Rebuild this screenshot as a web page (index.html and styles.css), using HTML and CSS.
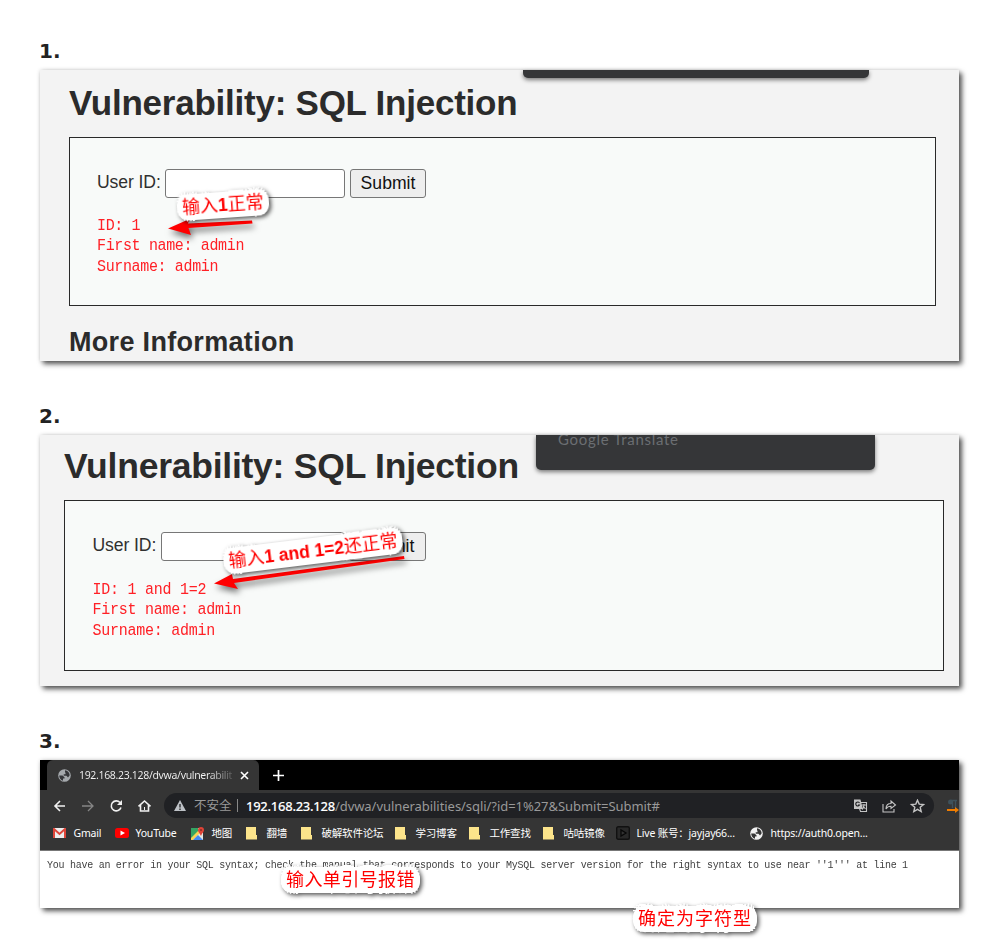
FILE: index.html
```
<!DOCTYPE html>
<html lang="zh-CN">
<head>
<meta charset="utf-8">
<title>SQL Injection</title>
<link rel="stylesheet" href="styles.css">
</head>
<body>
<main class="article">
  <h3 class="step">1.</h3>
  <section class="shot shot-one">
    <div class="popup popup-one"></div>
    <h1 class="title title-one">Vulnerability: SQL Injection</h1>
    <div class="panel panel-one">
      <div class="form"><span class="label">User ID:</span><span class="field"></span><span class="button">Submit</span></div>
      <pre class="result">ID: 1
First name: admin
Surname: admin</pre>
    </div>
    <h2 class="more">More Information</h2>
    <svg class="arrow" width="919" height="291"><path d="M128 158.500L149.500 149l-1.500 4.500 64-3 .5 3-64 4.500 2.500 7z"/></svg>
    <div class="note note-one">输入<b>1</b>正常</div>
  </section>

  <h3 class="step">2.</h3>
  <section class="shot shot-two">
    <div class="popup popup-two">Google Translate</div>
    <h1 class="title title-two">Vulnerability: SQL Injection</h1>
    <div class="panel panel-two">
      <div class="form"><span class="label">User ID:</span><span class="field"></span><span class="button">Submit</span></div>
      <pre class="result">ID: 1 and 1=2
First name: admin
Surname: admin</pre>
    </div>
    <svg class="arrow" width="919" height="251"><path d="M174 148.500L192 139l1 5 171-23 .5 3L194 148l4 6z"/></svg>
    <div class="note note-two">输入<b>1 and 1=2</b>还正常</div>
  </section>

  <h3 class="step">3.</h3>
  <section class="shot shot-three">
    <div class="tabs">
      <div class="tab">
        <svg class="globe" width="13" height="13" viewBox="0 0 13 13"><circle cx="6.500" cy="6.500" r="6.300" fill="#a5a9ad"/><path d="M1.200 6.500h3.300l2 1.800v1.200H5v2.200C2.500 11 1.300 9 1.200 6.500zM7 1.300c2.500.3 4.500 2.300 4.700 5L10 8.500 8.500 6.800H5.700V5.300h1.800V3.500H7z" fill="#35363a"/></svg>
        <span class="tab-title">192.168.23.128/dvwa/vulnerabilit</span>
        <svg width="9" height="9" viewBox="0 0 9 9"><path d="M1 1l7 7M8 1L1 8" stroke="#fff" stroke-width="1.600"/></svg>
      </div>
      <svg class="plus" width="11" height="11" viewBox="0 0 11 11"><path d="M5.500 0v11M0 5.500h11" stroke="#fff" stroke-width="1.700"/></svg>
    </div>
    <div class="toolbar">
      <svg class="nav" width="112" height="16" viewBox="0 0 112 16" fill="none" stroke="#f1f1f1" stroke-width="1.600">
        <path d="M13 8H3M8 3L3 8l5 5"/><path d="M30 8h11M36 3l5 5-5 5" stroke="#858585" stroke-width="1.300"/>
        <path d="M68 4.500a5 5 0 1 0 1 5"/><path d="M70 2v5h-5z" fill="#f1f1f1" stroke="none"/>
        <path d="M86.500 8.300l6-5.300 6 5.300M88.500 7v6h8V7"/><path d="M92.500 9v3" stroke-width="1"/>
      </svg>
      <div class="address">
        <svg class="warn" width="12" height="11" viewBox="0 0 12 11"><path d="M6 0l6 11H0z" fill="#bdc1c6"/><path d="M6 4v3.500M6 8.500V10" stroke="#202124" stroke-width="1.300"/></svg>
        <span class="unsafe">不安全</span><i class="bar"></i>
        <span class="url"><b>192.168.23.128</b><span class="path">/dvwa/vulnerabilities/sqli/?id=1%27&amp;Submit=Submit#</span></span>
        <svg class="actions" width="71" height="14" viewBox="0 0 71 14" fill="none" stroke="#c4c4c4" stroke-width="1.100">
          <path d="M5.500 3.500h7v9h-6l-1-3"/><path d="M.5 1h5.500l2.200 8.500H.5z" fill="#c4c4c4"/><path d="M5.500 4A2 2 0 1 0 5.500 6H4" stroke="#202124"/><path d="M8 6h4M10 5v1.500c0 2-1 3-2 4M9 7l2.500 3"/>
          <path d="M29 5v8h11v-3"/><path d="M32 10c0-4 2-5.500 5-5.500V2l4.500 4L37 9.500V7.300c-2 0-4 .7-5 2.700z"/>
          <path d="M63.500 1.200l1.700 3.900 4.300.4-3.300 2.800 1 4.200-3.700-2.200-3.700 2.200 1-4.200-3.300-2.800 4.300-.4z" stroke-width="1.400"/>
        </svg>
      </div>
      <svg class="extension" width="12" height="16" viewBox="0 0 12 16"><path d="M4 2.500h6M5.500 2v8M8.500 2v8" stroke="#3e515b" stroke-width="1.400"/><circle cx="3.500" cy="4" r="2.500" fill="#3e515b"/><path d="M0 12h10" stroke="#f07d00" stroke-width="2"/><path d="M8 9l4 3-4 3z" fill="#f07d00"/></svg>
    </div>
    <div class="bookmarks">
      <span class="mark"><svg width="13" height="10" viewBox="0 0 13 10"><path d="M0 0h13v10H0z" fill="#eee"/><path d="M1 10V1l5.500 5L12 1v9" fill="none" stroke="#df463a" stroke-width="2"/></svg>Gmail</span>
      <span class="mark"><svg width="14" height="10" viewBox="0 0 14 10"><rect width="14" height="10" rx="2.500" fill="#f00"/><path d="M5.500 2.500v5L10 5z" fill="#fff"/></svg>YouTube</span>
      <span class="mark"><svg width="13" height="13" viewBox="0 0 13 13"><path d="M0 1h12v12H0z" fill="#e5e8e4"/><path d="M0 1h7v5L0 12z" fill="#35a563"/><path d="M0 11l8-8 2 2-8 8H0z" fill="#f7d354"/><path d="M2 13l5-5 5 5z" fill="#448af1"/><path d="M10 9C8 5 7 5 7 3a3 3 0 0 1 6 0c0 2-1.500 2.500-3 6z" fill="#df4437"/><circle cx="10" cy="3" r="1" fill="#872d26"/></svg>地图</span>
      <span class="mark"><svg class="folder" width="12" height="13" viewBox="0 0 12 13"><path d="M0 0h10v8h1v4.500H0z"/></svg>翻墙</span>
      <span class="mark"><svg class="folder" width="12" height="13" viewBox="0 0 12 13"><path d="M0 0h10v8h1v4.500H0z"/></svg>破解软件论坛</span>
      <span class="mark"><svg class="folder" width="12" height="13" viewBox="0 0 12 13"><path d="M0 0h10v8h1v4.500H0z"/></svg>学习博客</span>
      <span class="mark"><svg class="folder" width="12" height="13" viewBox="0 0 12 13"><path d="M0 0h10v8h1v4.500H0z"/></svg>工作查找</span>
      <span class="mark"><svg class="folder" width="12" height="13" viewBox="0 0 12 13"><path d="M0 0h10v8h1v4.500H0z"/></svg>咕咕镜像</span>
      <span class="mark"><svg width="14" height="14" viewBox="0 0 14 14"><rect x=".7" y=".7" width="12.600" height="12.600" rx="1.500" fill="#292929" stroke="#111" stroke-width="1.400"/><path d="M5 4v6l5-3z" fill="#333" stroke="#080808" stroke-width="1.300"/></svg>Live 账号：jayjay66...</span>
      <span class="mark"><svg width="13" height="13" viewBox="0 0 13 13"><circle cx="6.500" cy="6.500" r="6.300" fill="#f1f1f1"/><path d="M1.200 6.500h3.300l2 1.800v1.200H5v2.200C2.500 11 1.300 9 1.200 6.500zM7 1.300c2.500.3 4.500 2.300 4.700 5L10 8.500 8.500 6.800H5.700V5.300h1.800V3.500H7z" fill="#353535"/></svg>https://auth0.open...</span>
    </div>
    <pre class="error">You have an error in your SQL syntax; check the manual that corresponds to your MySQL server version for the right syntax to use near ''1''' at line 1</pre>
    <div class="note note-three">输入单引号报错</div>
    <div class="note note-four">确定为字符型</div>
  </section>
</main>
</body>
</html>
```
FILE: styles.css
```
* { box-sizing: border-box; }
body { margin: 0; background: #fff; color: #2b2b2b; font-family: "Liberation Sans", "Noto Sans CJK SC", sans-serif; }
.article { width: 1000px; height: 949px; padding: 34px 41px 0 40px; overflow: hidden; }
.step { height: 36px; margin: 0 0 0 -1px; font: bold 20px/34px "DejaVu Sans", sans-serif; color: #222; }
.shot { position: relative; display: flow-root; width: 919px; background: #f3f3f3; box-shadow: 3px 3px 5px rgba(0,0,0,.66), 0 0 4px rgba(0,0,0,.14); }
.shot-one { height: 291px; margin-bottom: 38px; padding: 0 24px 0 29px; }
.shot-two { height: 251px; margin-bottom: 38px; padding: 0 16px 0 24px; }
.shot-three { height: 148px; background: #fff; }
.title { margin: 0; font-size: 35px; line-height: 40px; white-space: nowrap; }
.title-one { padding-top: 13px; height: 67px; letter-spacing: -.24px; }
.title-two { padding-top: 11px; height: 65px; font-size: 35.500px; letter-spacing: -.24px; }
.panel { background: #f8faf9; border: 1px solid #292929; font-size: 17.600px; }
.panel-one { width: 867px; height: 169px; padding: 31px 27px; }
.panel-two { width: 880px; height: 171px; padding: 31px 27.500px; }
.form { display: flex; align-items: center; height: 29px; color: #303030; }
.label { width: 68px; line-height: 24px; margin-top: -4px; white-space: nowrap; letter-spacing: -.1px; }
.field { width: 180px; height: 29px; background: #fff; border: 1px solid #777; border-radius: 3px; }
.button { width: 76px; height: 29px; margin-left: 5px; border: 1px solid #777; border-radius: 3px; background: #eee; color: #111; line-height: 26px; text-align: center; }
.panel-two .field { width: 183px; }
.panel-two .button { width: 77px; }
.result { margin: 18.500px 0 0; color: #ff2026; font: 15px/18.300px "Liberation Mono", monospace; letter-spacing: -.35px; transform: scaleY(1.1); transform-origin: 0 0; }
.panel-two .result { margin-top: 20px; letter-spacing: -.25px; }
.more { margin: 18.500px 0 0; font-size: 27px; line-height: 34px; letter-spacing: .32px; }
.popup { position: absolute; top: 0; background: #353638; box-shadow: 0 2px 4px rgba(0,0,0,.5); }
.popup-one { left: 483px; width: 346px; height: 8px; border-radius: 0 0 5px 5px; }
.popup-two { left: 496px; width: 339px; height: 35px; padding-left: 22px; border-radius: 0 0 5px 5px; color: #6b6e72; font: 15px/9px Lato, sans-serif; letter-spacing: .7px; overflow: hidden; }
.arrow { position: absolute; inset: 0; fill: #f00; filter: drop-shadow(2px 4px 3px rgba(0,0,0,.55)); }
.note {
  position: absolute; padding: 1px 5px; background: #fff; border-radius: 11px; color: red;
  font: 18px/24px "Liberation Sans", "Noto Sans CJK SC", sans-serif; white-space: nowrap;
  text-shadow: 6px 0 #fff, -6px 0 #fff, 0 6px #fff, 0 -6px #fff, 5px 3px #fff, 3px 5px #fff, -5px 3px #fff, -3px 5px #fff, 5px -3px #fff, 3px -5px #fff, -5px -3px #fff, -3px -5px #fff, 3px 3px #fff, -3px 3px #fff, 3px -3px #fff, -3px -3px #fff;
  filter: drop-shadow(2px 2px 2px rgba(0,0,0,.65));
}
.note b { position: relative; z-index: 1; text-shadow: none; font-size: 17.500px; }
.note-one { left: 137px; top: 122px; transform: rotate(-4deg); }
.note-two { left: 183px; top: 103px; transform: rotate(-7deg); }
.note-three { left: 241px; top: 107px; letter-spacing: .4px; }
.note-four { left: 593px; top: 146px; letter-spacing: 1px; }
.tabs { display: flex; align-items: center; height: 30px; padding-left: 7px; background: #000; font-family: "Noto Sans", sans-serif; }
.tab { display: flex; align-items: center; width: 212px; height: 30px; padding-left: 11px; background: #353535; border-radius: 6px 6px 0 0; }
.tab-title { width: 154px; margin: 0 7px 0 8px; font-size: 10.500px; letter-spacing: -.33px; white-space: nowrap; background: linear-gradient(90deg, #f5f5f5 83%, #555); -webkit-background-clip: text; color: transparent; }
.plus { margin-left: 14px; }
.toolbar { display: flex; align-items: center; height: 31px; background: #353535; }
.nav { margin-left: 12px; }
.address { display: flex; align-items: center; width: 770px; height: 25px; border-radius: 13px; background: #202124; color: #999; font: 13px/24px "Noto Sans", "Noto Sans CJK SC", sans-serif; }
.warn { margin-left: 10px; }
.unsafe { width: 38px; margin-left: 8px; font-size: 12.500px; white-space: nowrap; }
.bar { width: 1px; height: 13px; margin-left: 5px; background: #888; }
.url { width: 608px; margin-left: 8px; white-space: nowrap; }
.url b { color: #fff; font-weight: 500; -webkit-text-stroke: .1px #fff; letter-spacing: -.25px; }
.path { letter-spacing: -.05px; }
.extension { margin-left: 13px; }
.bookmarks { display: grid; grid-template-columns: 62px 76px 55px 55px 94px 74px 74px 73px 134px 1fr; align-items: center; height: 30px; padding: 0 0 5px 13px; background: #353535; border-bottom: 1px solid #777; color: #fff; font: 10.500px/20px "Noto Sans", "Noto Sans CJK SC", sans-serif; letter-spacing: -.2px; }
.mark { display: grid; grid-template-columns: 20.500px 1fr; align-items: center; white-space: nowrap; }
.folder { fill: #fce48b; }
.error { margin: 7px 0 0 7px; color: #404040; font: 10px/13px "Liberation Mono", monospace; letter-spacing: -.262px; transform: scaleY(1.1); transform-origin: 0 0; }
```
